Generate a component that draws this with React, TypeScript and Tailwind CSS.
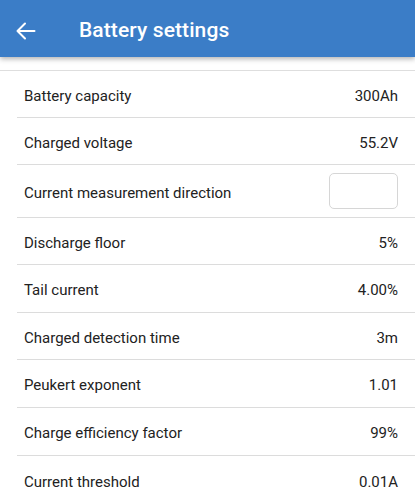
import React from "react";

const rows: { label: string; value?: string; h: string; box?: boolean }[] = [
  { label: "Battery capacity", value: "300Ah", h: "h-[47px]" },
  { label: "Charged voltage", value: "55.2V", h: "h-[47px]" },
  { label: "Current measurement direction", box: true, h: "h-[53px]" },
  { label: "Discharge floor", value: "5%", h: "h-[47px]" },
  { label: "Tail current", value: "4.00%", h: "h-[48px]" },
  { label: "Charged detection time", value: "3m", h: "h-[47px]" },
  { label: "Peukert exponent", value: "1.01", h: "h-[48px]" },
  { label: "Charge efficiency factor", value: "99%", h: "h-[48px]" },
  { label: "Current threshold", value: "0.01A", h: "h-[48px]" },
];

export default function App() {
  return (
    <div
      className="w-[415px] h-[500px] overflow-hidden bg-white"
      style={{ fontFamily: "Roboto, 'Noto Sans', sans-serif" }}
    >
      <div className="relative z-10 h-[57px] pt-[5px] bg-[#3b7dc7] flex items-center shadow-[0_2px_5px_rgba(0,0,0,0.3)]">
        <svg
          className="ml-[14px] w-[24px] h-[24px]"
          viewBox="0 0 24 24"
          fill="none"
          stroke="white"
          strokeWidth="2"
          strokeLinecap="round"
          strokeLinejoin="round"
        >
          <path d="M20.5 12H3.5M11 4.5 3.5 12l7.5 7.5" />
        </svg>
        <span className="ml-[41px] text-white text-[21px] font-medium tracking-[0.1px]">
          Battery settings
        </span>
      </div>
      <div className="h-[13px] bg-white" />
      <div className="border-t border-[#dedede]">
        {rows.map((r, i) => (
          <div key={i} className="pl-[17px]">
            <div
              className={`${r.h} flex items-center justify-between pl-[7px] pr-[17px] text-[#222222] text-[15px] ${
                i < rows.length - 1 ? "border-b border-[#dcdcdc]" : ""
              }`}
            >
              <span className="translate-y-[2px]">{r.label}</span>
              {r.box ? (
                <div className="w-[69px] h-[36px] rounded-[5px] border border-[#d6d6d6] bg-white" />
              ) : (
                <span className="translate-y-[2px]">{r.value}</span>
              )}
            </div>
          </div>
        ))}
      </div>
    </div>
  );
}
